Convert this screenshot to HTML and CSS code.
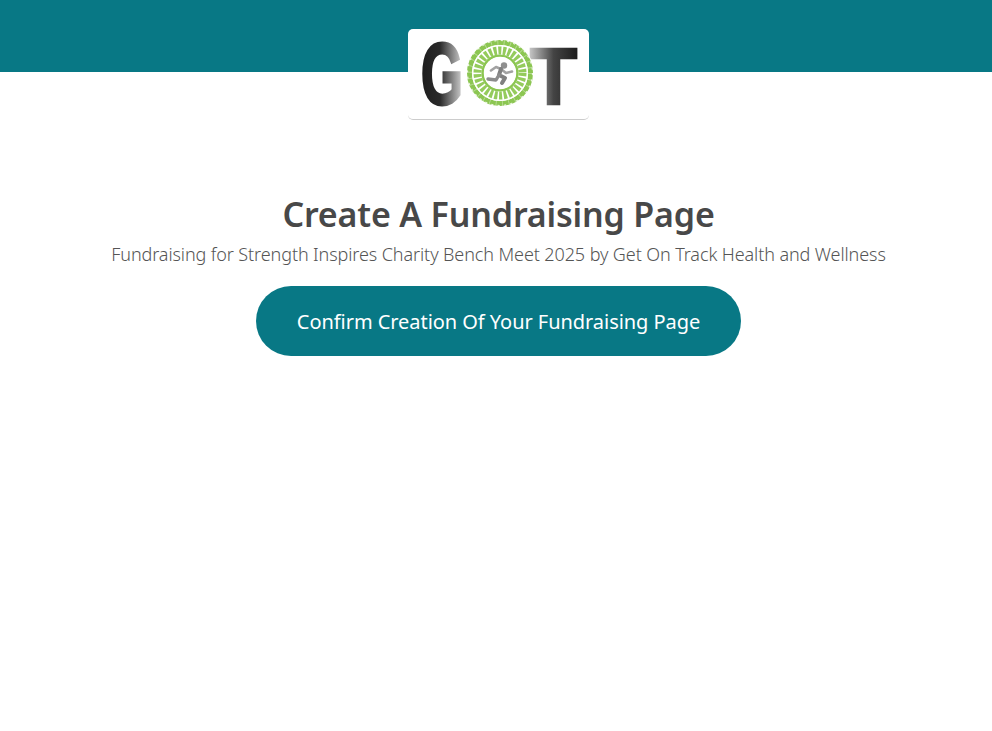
FILE: index.html

```html
<!DOCTYPE html>
<html lang="en">
<head>
    <meta charset="UTF-8">
    <meta name="viewport" content="width=device-width, initial-scale=1.0">
    <title>Create A Fundraising Page</title>
    <link rel="stylesheet" href="styles.css">
</head>
<body>
    <div class="top-bar"></div>

    <div class="content">
        <div class="logo-card">
            <svg class="logo" width="181" height="90" viewBox="0 0 181 90" role="img" aria-label="GOT">
                <defs>
                    <linearGradient id="g-fade" x1="0" x2="1" y1="0" y2="0">
                        <stop offset="0" stop-color="#1d1d1d"/>
                        <stop offset="0.45" stop-color="#2a2a2a"/>
                        <stop offset="1" stop-color="#d4d4d4"/>
                    </linearGradient>
                    <linearGradient id="t-fade" x1="0" x2="1" y1="0" y2="0">
                        <stop offset="0" stop-color="#c4c4c4"/>
                        <stop offset="0.5" stop-color="#444"/>
                        <stop offset="1" stop-color="#1d1d1d"/>
                    </linearGradient>
                </defs>
                <text class="logo-letter logo-g" x="13" y="74.5" textLength="42" lengthAdjust="spacingAndGlyphs" fill="url(#g-fade)" stroke="url(#g-fade)">G</text>
                <text class="logo-letter logo-t" x="122" y="74.7" textLength="47" lengthAdjust="spacingAndGlyphs" fill="url(#t-fade)" stroke="url(#t-fade)">T</text>
                <!-- ring -->
                <circle cx="92" cy="44" r="34" fill="#fff"/>
                <circle cx="92" cy="44" r="30.5" fill="none" stroke="#8cc652" stroke-width="5"/>
                <circle cx="92" cy="44" r="32.5" fill="none" stroke="#fff" stroke-width="1.2" stroke-dasharray="2.2 4.2" opacity="0.8"/>
                <circle cx="92" cy="44" r="30.5" fill="none" stroke="#fff" stroke-width="5" stroke-dasharray="1 5.4" opacity="0.35"/>
                <circle cx="92" cy="44" r="27.6" fill="none" stroke="#fff" stroke-width="1"/>
                <circle cx="92" cy="44" r="22.5" fill="none" stroke="#94cb5c" stroke-width="8" stroke-dasharray="3.1 1.61"/>
                <circle cx="92" cy="44" r="17.4" fill="none" stroke="#8cc652" stroke-width="2.4"/>
                <circle cx="92" cy="44" r="16" fill="#fff"/>
                <!-- runner -->
                <circle cx="96" cy="36.5" r="3.2" fill="#8f8f8f"/>
                <path d="M83 41.5 L88 38 L93 40 L98 44 L104 42.5" fill="none" stroke="#a2a2a2" stroke-width="2.6" stroke-linecap="round" stroke-linejoin="round"/>
                <path d="M93 40 L91 46 L97 49 L94 54" fill="none" stroke="#808080" stroke-width="4" stroke-linecap="round" stroke-linejoin="round"/>
                <path d="M91 46 L88 51 L80 50" fill="none" stroke="#8c8c8c" stroke-width="3.4" stroke-linecap="round" stroke-linejoin="round"/>
            </svg>
        </div>

        <h1 class="title">Create A Fundraising Page</h1>
        <p class="subtitle">Fundraising for Strength Inspires Charity Bench Meet 2025 by Get On Track Health and Wellness</p>
        <a class="confirm-btn" href="#">Confirm Creation Of Your Fundraising Page</a>
    </div>
</body>
</html>
```

FILE: styles.css

```css
* {
    margin: 0;
    padding: 0;
    box-sizing: border-box;
}

body {
    font-family: "Noto Sans", "Open Sans", sans-serif;
    background: #fff;
    min-height: 100vh;
}

.top-bar {
    height: 72px;
    background: #087885;
}

.content {
    display: flex;
    flex-direction: column;
    align-items: center;
    padding-left: 5px;
    margin-top: -43px;
}

.logo-card {
    width: 181px;
    height: 91px;
    background: #fff;
    border-radius: 5px;
    border-bottom: 1px solid #ccc;
}

.logo {
    display: block;
    overflow: visible;
}

.logo-letter {
    font-family: "Liberation Sans", sans-serif;
    font-weight: 700;
}

.logo-g {
    font-size: 88px;
    stroke-width: 3px;
}

.logo-t {
    font-size: 80px;
    stroke-width: 2.5px;
}

.title {
    margin-top: 71px;
    font-size: 34px;
    line-height: 46px;
    font-weight: 600;
    letter-spacing: -0.17px;
    color: #484848;
}

.subtitle {
    margin-top: 5px;
    font-size: 18px;
    line-height: 24px;
    font-weight: 300;
    letter-spacing: -0.1px;
    color: #555;
}

.confirm-btn {
    display: block;
    width: 485px;
    height: 70px;
    margin-top: 20px;
    border-radius: 35px;
    background: #087885;
    color: #fff;
    font-size: 20px;
    line-height: 72px;
    font-weight: 400;
    letter-spacing: -0.05px;
    text-align: center;
    text-decoration: none;
}
```
